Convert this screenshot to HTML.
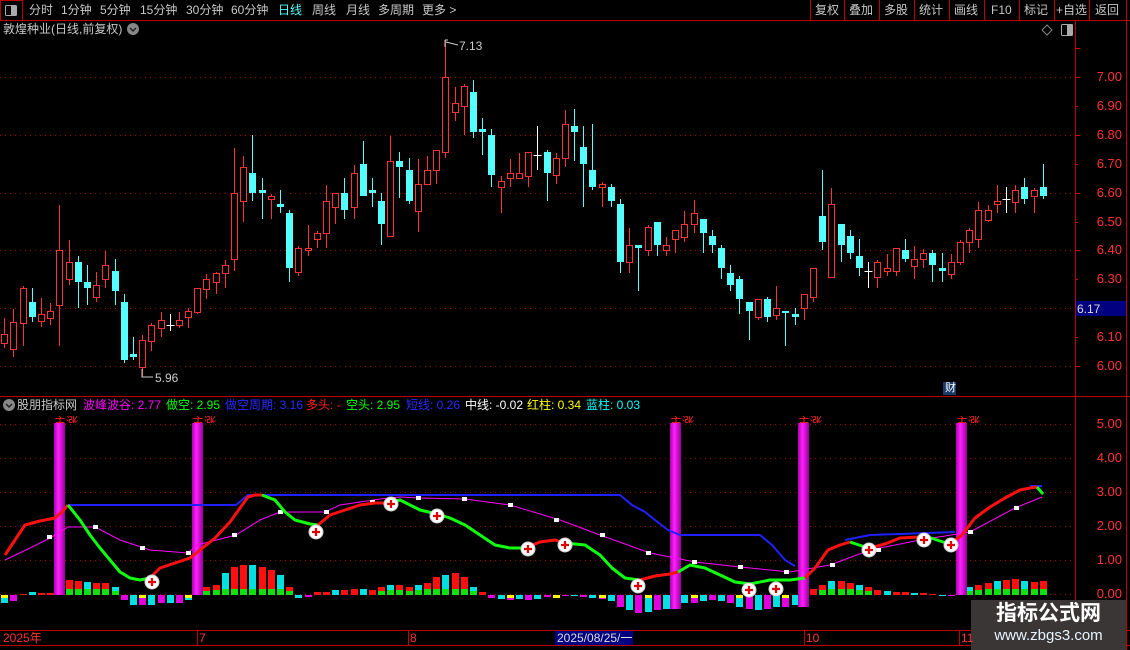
<!DOCTYPE html>
<html><head><meta charset="utf-8"><style>
html,body{margin:0;padding:0;background:#000;width:1130px;height:650px;overflow:hidden;font-family:"Liberation Sans","Noto Sans CJK SC",sans-serif;}
.t{position:absolute;font-size:12px;white-space:nowrap;line-height:14px}
</style></head><body>
<svg id="s" width="1130" height="650" style="position:absolute;left:0;top:0" xmlns="http://www.w3.org/2000/svg">
<defs><linearGradient id="mg" x1="0" x2="1" y1="0" y2="0"><stop offset="0" stop-color="#b000b0"/><stop offset="0.4" stop-color="#ff20ff"/><stop offset="1" stop-color="#9a009a"/></linearGradient></defs>
<line x1="0" y1="20.5" x2="1130" y2="20.5" stroke="#c00000"/>
<rect x="0.5" y="0.5" width="22" height="20" fill="none" stroke="#c00000"/>
<rect x="5.5" y="5.5" width="11" height="10" fill="none" stroke="#aaa" rx="1"/><rect x="11" y="6" width="5" height="9" fill="#aaa"/>
<g stroke="#c00000"><line x1="810.5" y1="0" x2="810.5" y2="20"/><line x1="844.5" y1="0" x2="844.5" y2="20"/><line x1="879.5" y1="0" x2="879.5" y2="20"/><line x1="914.5" y1="0" x2="914.5" y2="20"/><line x1="949.5" y1="0" x2="949.5" y2="20"/><line x1="984.5" y1="0" x2="984.5" y2="20"/><line x1="1019.5" y1="0" x2="1019.5" y2="20"/><line x1="1054.5" y1="0" x2="1054.5" y2="20"/><line x1="1089.5" y1="0" x2="1089.5" y2="20"/><line x1="1126.5" y1="0" x2="1126.5" y2="650"/><line x1="1075.5" y1="20" x2="1075.5" y2="646"/></g>
<circle cx="133" cy="29" r="6" fill="#888"/><path d="M130 28 L133 31 L136 28" stroke="#222" fill="none" stroke-width="1.5"/>
<circle cx="9" cy="405" r="6" fill="#888"/><path d="M6 404 L9 407 L12 404" stroke="#222" fill="none" stroke-width="1.5"/>
<path d="M1047 25 L1052 30 L1047 35 L1042 30 Z" fill="none" stroke="#888"/>
<rect x="1061.5" y="24.5" width="11" height="11" fill="none" stroke="#aaa" rx="1"/><rect x="1067" y="25" width="5" height="10" fill="#aaa"/>
<g stroke="#a00000" stroke-dasharray="1 4"><line x1="0" y1="77.5" x2="1075" y2="77.5"/><line x1="0" y1="135.5" x2="1075" y2="135.5"/><line x1="0" y1="193.5" x2="1075" y2="193.5"/><line x1="0" y1="250.5" x2="1075" y2="250.5"/><line x1="0" y1="308.5" x2="1075" y2="308.5"/><line x1="0" y1="366.5" x2="1075" y2="366.5"/>
<line x1="0" y1="424.5" x2="1075" y2="424.5"/><line x1="0" y1="458.5" x2="1075" y2="458.5"/><line x1="0" y1="492.5" x2="1075" y2="492.5"/><line x1="0" y1="526.5" x2="1075" y2="526.5"/><line x1="0" y1="560.5" x2="1075" y2="560.5"/><line x1="0" y1="594.5" x2="1075" y2="594.5"/></g>
<g stroke="#c00000"><line x1="1075" y1="48.5" x2="1080" y2="48.5"/><line x1="1075" y1="77.5" x2="1080" y2="77.5"/><line x1="1075" y1="106.5" x2="1078" y2="106.5"/><line x1="1075" y1="135.5" x2="1080" y2="135.5"/><line x1="1075" y1="164.5" x2="1078" y2="164.5"/><line x1="1075" y1="193.5" x2="1080" y2="193.5"/><line x1="1075" y1="222.5" x2="1078" y2="222.5"/><line x1="1075" y1="250.5" x2="1080" y2="250.5"/><line x1="1075" y1="279.5" x2="1078" y2="279.5"/><line x1="1075" y1="337.5" x2="1078" y2="337.5"/><line x1="1075" y1="366.5" x2="1080" y2="366.5"/>
<line x1="0" y1="396.5" x2="1130" y2="396.5"/><line x1="0" y1="630.5" x2="1130" y2="630.5"/><line x1="0" y1="645.5" x2="1130" y2="645.5"/></g>
<rect x="1076" y="301" width="50" height="15" fill="#000080"/>
<g id="cand"></g>
<g stroke="#ccc" fill="none"><path d="M445 40 L445 47 M445 40 L448 40 M446 42 L458 45"/><path d="M142 369 L142 377 L153 377"/></g>
<g id="hist"></g>
<g fill="url(#mg)"><rect x="54" y="423" width="11" height="172"/><rect x="192" y="423" width="11" height="172"/><rect x="670" y="423" width="11" height="186"/><rect x="798" y="423" width="11" height="184"/><rect x="956" y="423" width="11" height="172"/></g>
<polyline fill="none" stroke="#2020ff" stroke-width="2" points="68,505 236,505 248,495 620,495 632,505 645,512 655,520 668,530 680,535 760,535 772,545 785,560 795,566"/>
<polyline fill="none" stroke="#2020ff" stroke-width="2" points="845,540 870,535 955,532"/>
<polyline fill="none" stroke="#2020ff" stroke-width="2" points="1030,486 1042,486"/>
<polyline fill="none" stroke="#ff00ff" stroke-width="1" points="5,560 30,548 50,538 68,527 95,527 120,540 150,550 188,553 197,545 236,535 260,520 280,512 325,512 340,505 380,499 400,497 420,498 465,499 510,505 560,520 600,535 650,553 695,562 740,567 790,572 830,565 870,550 920,540 970,532 1015,508 1042,497"/>
<g fill="#fff"><rect x="47" y="535" width="5" height="4"/><rect x="93" y="525" width="5" height="4"/><rect x="140" y="546" width="5" height="4"/><rect x="186" y="551" width="5" height="4"/><rect x="232" y="533" width="5" height="4"/><rect x="278" y="510" width="5" height="4"/><rect x="324" y="510" width="5" height="4"/><rect x="370" y="500" width="5" height="4"/><rect x="416" y="496" width="5" height="4"/><rect x="462" y="497" width="5" height="4"/><rect x="508" y="503" width="5" height="4"/><rect x="554" y="518" width="5" height="4"/><rect x="600" y="533" width="5" height="4"/><rect x="646" y="551" width="5" height="4"/><rect x="692" y="560" width="5" height="4"/><rect x="738" y="565" width="5" height="4"/><rect x="784" y="570" width="5" height="4"/><rect x="830" y="563" width="5" height="4"/><rect x="876" y="548" width="5" height="4"/><rect x="922" y="538" width="5" height="4"/><rect x="968" y="530" width="5" height="4"/><rect x="1014" y="506" width="5" height="4"/></g>
<g fill="none" stroke-width="3" stroke-linejoin="round">
<polyline stroke="#ff1010" points="5,555 15,540 25,525 40,521 55,518 62,512 68,505"/>
<polyline stroke="#10ff10" points="68,505 80,520 90,535 100,548 110,560 120,572 130,578 140,580 150,578"/>
<polyline stroke="#ff1010" points="150,578 160,568 175,563 190,558 200,550 215,538 230,522 240,508 248,497 255,495 262,495"/>
<polyline stroke="#10ff10" points="262,495 275,500 285,512 295,520 310,524 318,525"/>
<polyline stroke="#ff1010" points="318,525 330,515 345,510 360,505 375,503 388,503"/>
<polyline stroke="#10ff10" points="388,503 400,500 420,510 437,514 450,518 465,525 480,535 495,545 510,548 525,548"/>
<polyline stroke="#ff1010" points="525,548 540,542 555,540 565,543"/>
<polyline stroke="#10ff10" points="565,543 585,545 600,555 612,568 625,578 640,580"/>
<polyline stroke="#ff1010" points="640,580 655,576 670,574 678,572"/>
<polyline stroke="#10ff10" points="678,572 690,565 705,568 720,575 735,582 750,584 770,580 790,580 805,578"/>
<polyline stroke="#ff1010" points="805,578 815,568 828,550 840,545 850,542"/>
<polyline stroke="#10ff10" points="850,542 862,546 870,548"/>
<polyline stroke="#ff1010" points="870,548 885,544 900,538 920,537 928,537"/>
<polyline stroke="#10ff10" points="928,537 940,541 950,544"/>
<polyline stroke="#ff1010" points="950,544 962,535 975,518 990,507 1005,498 1020,490 1030,488 1037,487"/>
<polyline stroke="#10ff10" points="1037,487 1043,494"/>
</g>
<g id="plus"></g>
<g stroke="#c00000"><line x1="197.5" y1="630" x2="197.5" y2="645"/><line x1="408.5" y1="630" x2="408.5" y2="645"/><line x1="804.5" y1="630" x2="804.5" y2="645"/><line x1="959.5" y1="630" x2="959.5" y2="645"/></g>
<rect x="555" y="631" width="78" height="14" fill="#000080"/>
<rect x="943" y="382" width="13" height="13" fill="#1a3a6a"/>
<rect x="971" y="600" width="155" height="50" fill="#3a3636"/>
</svg>
<div class="t" style="left:29px;top:3px;color:#c8c8c8">分时</div>
<div class="t" style="left:61px;top:3px;color:#c8c8c8">1分钟</div>
<div class="t" style="left:100px;top:3px;color:#c8c8c8">5分钟</div>
<div class="t" style="left:140px;top:3px;color:#c8c8c8">15分钟</div>
<div class="t" style="left:186px;top:3px;color:#c8c8c8">30分钟</div>
<div class="t" style="left:231px;top:3px;color:#c8c8c8">60分钟</div>
<div class="t" style="left:278px;top:3px;color:#54ffff">日线</div>
<div class="t" style="left:312px;top:3px;color:#c8c8c8">周线</div>
<div class="t" style="left:346px;top:3px;color:#c8c8c8">月线</div>
<div class="t" style="left:378px;top:3px;color:#c8c8c8">多周期</div>
<div class="t" style="left:422px;top:3px;color:#c8c8c8">更多 &gt;</div>
<div class="t" style="left:815px;top:3px;color:#c8c8c8">复权</div>
<div class="t" style="left:849px;top:3px;color:#c8c8c8">叠加</div>
<div class="t" style="left:884px;top:3px;color:#c8c8c8">多股</div>
<div class="t" style="left:919px;top:3px;color:#c8c8c8">统计</div>
<div class="t" style="left:954px;top:3px;color:#c8c8c8">画线</div>
<div class="t" style="left:991px;top:3px;color:#c8c8c8">F10</div>
<div class="t" style="left:1024px;top:3px;color:#c8c8c8">标记</div>
<div class="t" style="left:1056px;top:3px;color:#c8c8c8">+自选</div>
<div class="t" style="left:1095px;top:3px;color:#c8c8c8">返回</div>
<div class="t" style="left:3px;top:22px;color:#c8c8c8">敦煌种业(日线,前复权)</div>
<div class="t" style="left:459px;top:39px;color:#ccc">7.13</div>
<div class="t" style="left:155px;top:371px;color:#ccc">5.96</div>
<div class="t" style="left:945px;top:381px;color:#fff;font-size:11px">财</div>
<div style="position:absolute;left:1080px;top:0;width:42px;font-size:13px;color:#ff3232;text-align:right;line-height:14px">
<div style="position:absolute;right:0;top:70px">7.00</div><div style="position:absolute;right:0;top:99px">6.90</div><div style="position:absolute;right:0;top:128px">6.80</div><div style="position:absolute;right:0;top:157px">6.70</div><div style="position:absolute;right:0;top:186px">6.60</div><div style="position:absolute;right:0;top:215px">6.50</div><div style="position:absolute;right:0;top:243px">6.40</div><div style="position:absolute;right:0;top:272px">6.30</div><div style="position:absolute;right:0;top:330px">6.10</div><div style="position:absolute;right:0;top:359px">6.00</div>
<div style="position:absolute;right:0;top:417px">5.00</div><div style="position:absolute;right:0;top:451px">4.00</div><div style="position:absolute;right:0;top:485px">3.00</div><div style="position:absolute;right:0;top:519px">2.00</div><div style="position:absolute;right:0;top:553px">1.00</div><div style="position:absolute;right:0;top:587px">0.00</div></div>
<div class="t" style="left:1077px;top:302px;color:#ddd;font-size:12px">6.17</div>
<div class="t" style="left:17px;top:398px;color:#c8c8c8">股朋指标网</div>
<div class="t" style="left:83px;top:398px;color:#ff00ff">波峰波谷: 2.77</div>
<div class="t" style="left:166px;top:398px;color:#00ff00">做空: 2.95</div>
<div class="t" style="left:225px;top:398px;color:#2a2aff">做空周期: 3.16</div>
<div class="t" style="left:306px;top:398px;color:#ff2020">多头: -</div>
<div class="t" style="left:346px;top:398px;color:#00ff00">空头: 2.95</div>
<div class="t" style="left:406px;top:398px;color:#2a2aff">短线: 0.26</div>
<div class="t" style="left:465px;top:398px;color:#fff">中线: -0.02</div>
<div class="t" style="left:527px;top:398px;color:#ffff00">红柱: 0.34</div>
<div class="t" style="left:586px;top:398px;color:#00ffff">蓝柱: 0.03</div>
<div class="t" style="left:54px;top:415px;color:#ff2020;font-size:12px;height:8px;overflow:hidden">主涨</div>
<div class="t" style="left:192px;top:415px;color:#ff2020;font-size:12px;height:8px;overflow:hidden">主涨</div>
<div class="t" style="left:670px;top:415px;color:#ff2020;font-size:12px;height:8px;overflow:hidden">主涨</div>
<div class="t" style="left:798px;top:415px;color:#ff2020;font-size:12px;height:8px;overflow:hidden">主涨</div>
<div class="t" style="left:956px;top:415px;color:#ff2020;font-size:12px;height:8px;overflow:hidden">主涨</div>
<div class="t" style="left:3px;top:631px;color:#ff3232">2025年</div>
<div class="t" style="left:199px;top:631px;color:#ff3232">7</div>
<div class="t" style="left:410px;top:631px;color:#ff3232">8</div>
<div class="t" style="left:557px;top:631px;color:#ddd">2025/08/25/一</div>
<div class="t" style="left:806px;top:631px;color:#ff3232">10</div>
<div class="t" style="left:961px;top:631px;color:#ff3232">11</div>
<div class="t" style="left:971px;top:602px;width:155px;text-align:center;color:#fff;font-size:21px;font-weight:bold;line-height:24px">指标公式网</div>
<div class="t" style="left:971px;top:627px;width:155px;text-align:center;color:#e8f4ff;font-size:15px;line-height:18px">www.zbgs3.com</div>
<script>
var C=[[318,334,343,348,'r'],[309,322,349,357,'r'],[286,288,323,346,'r'],[288,302,317,322,'c'],[298,314,321,327,'r'],[303,311,318,325,'r'],[205,250,305,346,'r'],[240,262,279,285,'r'],[256,262,282,308,'c'],[265,282,288,305,'c'],[272,285,297,302,'r'],[251,265,279,288,'r'],[259,271,291,305,'c'],[294,302,360,363,'c'],[337,354,357,360,'c'],[335,340,367,377,'r'],[323,325,341,351,'r'],[312,320,328,337,'r'],[314,325,325,331,'w'],[312,320,325,328,'r'],[308,311,317,328,'r'],[288,288,312,314,'r'],[274,279,289,299,'r'],[272,273,282,294,'r'],[260,265,273,288,'r'],[148,193,259,271,'r'],[156,167,201,222,'r'],[135,173,193,201,'c'],[178,190,193,219,'c'],[194,196,199,219,'r'],[190,204,207,213,'c'],[210,213,268,282,'c'],
[246,248,272,276,'r'],[225,248,250,256,'r'],[231,233,239,248,'r'],[185,201,233,248,'r'],[193,193,207,224,'r'],[178,193,210,219,'c'],[165,173,207,219,'r'],[141,164,196,196,'c'],[178,190,193,207,'c'],[193,201,224,245,'c'],[136,161,236,236,'r'],[152,161,167,198,'c'],[158,170,201,204,'c'],[159,184,211,232,'r'],[156,170,184,184,'r'],[150,150,170,184,'r'],[40,77,152,158,'r'],[87,103,112,121,'r'],[84,86,106,135,'r'],[80,92,132,138,'c'],[118,129,132,155,'c'],[129,135,175,187,'c'],[176,181,187,213,'r'],[159,173,178,187,'r'],[153,173,178,178,'r'],[152,152,176,187,'r'],[126,155,155,170,'w'],[150,152,173,201,'c'],[153,158,175,184,'r'],[110,124,158,167,'r'],[109,126,132,161,'c'],[126,147,164,207,'c'],[124,170,187,190,'c'],[182,184,187,207,'r'],[184,187,201,207,'c'],[199,204,262,273,'c'],[228,245,262,273,'r'],[246,245,248,291,'c'],[225,227,250,256,'r'],[222,222,245,256,'c'],
[237,245,250,256,'r'],[230,230,239,253,'r'],[211,224,237,242,'r'],[200,213,224,233,'r'],[219,219,233,253,'c'],[230,236,245,253,'c'],[245,248,268,279,'c'],[265,273,285,291,'c'],[276,279,299,314,'c'],[302,302,311,340,'c'],[299,299,317,320,'r'],[297,299,317,322,'c'],[286,308,315,320,'r'],[311,311,313,346,'c'],[308,314,317,325,'c'],[294,294,308,320,'r'],[268,268,297,302,'r'],[170,216,242,250,'c'],[188,204,277,277,'r'],[224,224,245,262,'c'],[230,236,253,259,'c'],[239,256,268,276,'c'],[262,271,271,288,'w'],[260,262,277,288,'r'],[254,268,271,276,'r'],[248,248,271,276,'r'],[239,250,259,262,'c'],[246,259,266,279,'r'],[249,253,259,268,'r'],[250,253,265,282,'c'],[253,268,271,282,'c'],[254,262,274,279,'r'],[240,242,262,265,'r'],[228,230,242,253,'r'],[202,210,239,248,'r'],[205,210,220,222,'r'],[185,201,204,213,'r'],[187,199,199,213,'w'],[185,190,202,213,'r'],[178,187,199,204,'c'],[188,190,196,213,'r'],[164,187,196,199,'c']];
var s='';
for(var i=0;i<C.length;i++){var c=C[i],x=Math.round(4.3+9.19*i)+0.5,col=c[4]=='r'?'#ff3232':c[4]=='c'?'#54ffff':'#ffffff';
s+='<line x1="'+x+'" y1="'+c[0]+'" x2="'+x+'" y2="'+c[3]+'" stroke="'+col+'"/>';
if(c[4]=='w'){s+='<line x1="'+(x-4)+'" y1="'+c[1]+'.5" x2="'+(x+4)+'" y2="'+c[1]+'.5" stroke="#fff"/>';}
else{var h=Math.max(c[2]-c[1],2);
if(c[4]=='r')s+='<rect x="'+(x-3)+'" y="'+(c[1]+0.5)+'" width="6" height="'+h+'" fill="#000" stroke="#ff3232"/>';
else s+='<rect x="'+(x-3.5)+'" y="'+c[1]+'" width="7" height="'+h+'" fill="#54ffff"/>';}}
document.getElementById('cand').innerHTML=s;
var V=[-8,-6,1,3,2,2,0,15,14,13,12,12,8,-5,-10,-10,-10,-8,-8,-8,-5,0,8,10,22,28,30,30,28,25,20,8,-3,-2,3,3,5,5,6,6,5,8,10,10,8,10,12,18,20,22,18,8,3,-3,-4,-5,-4,-5,-4,-2,-2,-1,-1,-2,-3,-4,-6,-12,-15,-18,-17,-15,-14,0,-8,-8,-6,-5,-6,-8,-12,-14,-15,-14,-12,-12,-10,0,6,10,14,14,12,10,8,5,4,3,3,2,2,1,-1,-1,0,8,10,12,14,15,16,14,13,14];
var h='';
for(var i=0;i<V.length;i++){var v=V[i];if(!v)continue;var x=Math.round(4.3+9.19*i)-3;
if(v>0){var col=(i%3==0)?'#00e0e0':'#ff1010';h+='<rect x="'+x+'" y="'+(595-v)+'" width="7" height="'+v+'" fill="'+col+'"/>';if(v>6)h+='<rect x="'+x+'" y="'+(595-Math.min(6,v/2))+'" width="7" height="'+Math.min(6,v/2)+'" fill="#10e010"/>';}
else{var col=(i%2)?'#e000e0':'#00e0e0';h+='<rect x="'+x+'" y="595" width="7" height="'+(-v)+'" fill="'+col+'"/>';if(i%5==0)h+='<rect x="'+x+'" y="595" width="7" height="3" fill="#ffff00"/>';}}
document.getElementById('hist').innerHTML=h;
var P=[[152,582],[316,532],[391,504],[437,516],[528,549],[565,545],[638,586],[749,590],[776,589],[869,550],[924,540],[951,545]],p='';
for(var i=0;i<P.length;i++){var a=P[i][0],b=P[i][1];p+='<circle cx="'+a+'" cy="'+b+'" r="7" fill="#fff" stroke="#ccc"/><path d="M'+(a-4)+' '+b+'h8M'+a+' '+(b-4)+'v8" stroke="#e00000" stroke-width="2.2"/>';}
document.getElementById('plus').innerHTML=p;
</script>
</body></html>
